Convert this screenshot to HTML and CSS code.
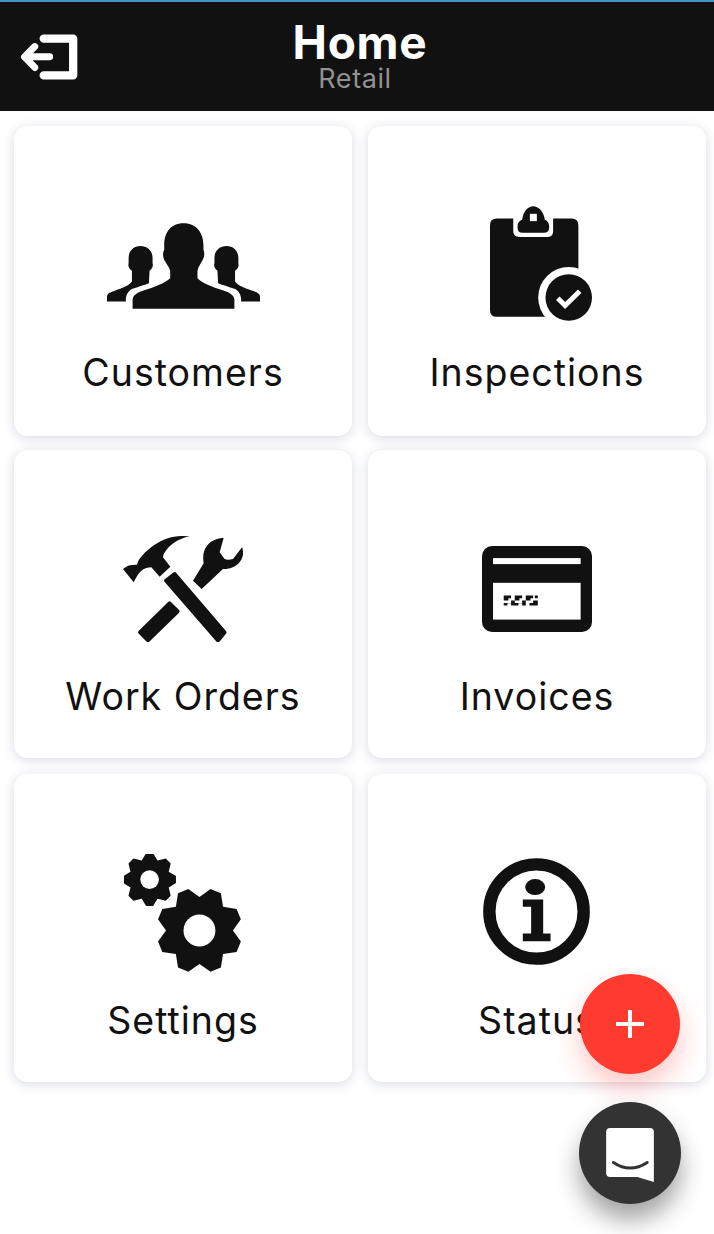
FILE: index.html
```html
<!DOCTYPE html>
<html lang="en">
<head>
    <meta charset="UTF-8">
    <meta name="viewport" content="width=device-width, initial-scale=1.0">
    <title>Home</title>
    <link rel="stylesheet" href="styles.css">
</head>
<body>
    <header class="top-bar">
        <button class="back-button" aria-label="Exit">
            <svg class="back-icon" viewBox="50 95 195 160">
                <path class="back-frame" d="M130 118H219V229H130"/>
                <path class="back-arrow" d="M148 173H78M103 142L72 173L103 205"/>
            </svg>
        </button>
        <div class="top-title">
            <h1>Home</h1>
            <p>Retail</p>
        </div>
    </header>

    <main class="menu-grid">
        <a class="menu-card">
            <span class="menu-icon">
                <svg class="icon-customers" viewBox="50 70 460 257">
                    <path d="M280 70C320 70 340 100 340 135V150C345 160 342 175 335 185C330 195 322 205 322 215V235C335 250 370 262 400 272C425 280 433 290 433 300V327H127V300C127 290 135 280 160 272C190 262 225 250 240 235V215C240 205 230 195 225 185C218 175 216 160 222 150V135C222 100 240 70 280 70Z"/>
                    <path id="side-head" d="M150 138C172 138 187 152 187 175V190C190 200 185 207 178 213L176 250C165 255 150 258 125 268C112 275 105 290 107 305H50V290C50 282 60 277 75 272C95 265 115 258 125 245V213C118 207 112 200 115 190V175C115 152 130 138 150 138Z"/>
                    <use href="#side-head" transform="translate(560) scale(-1 1)"/>
                </svg>
            </span>
            <span class="menu-label">Customers</span>
        </a>
        <a class="menu-card">
            <span class="menu-icon">
                <svg class="icon-inspections" viewBox="60 35 307 345">
                    <path d="M80 72H130V110C130 122 138 128 150 128H232C244 128 250 122 250 110V72H306Q326 72 326 92V348Q326 368 306 368H80Q60 368 60 348V92Q60 72 80 72Z"/>
                    <path d="M143 95C143 85 150 78 157 76C160 50 175 35 190 35C205 35 222 50 225 76C232 78 238 85 238 95V100Q238 115 222 115H158Q143 115 143 100Z"/>
                    <rect class="cut" x="180" y="58" width="21" height="22"/>
                    <circle class="cut" cx="297" cy="310" r="92"/>
                    <circle cx="297" cy="310" r="70"/>
                    <path class="check" d="M264 312L286 334L330 291"/>
                </svg>
            </span>
            <span class="menu-label">Inspections</span>
        </a>
        <a class="menu-card">
            <span class="menu-icon">
                <svg class="icon-orders" viewBox="40 36 360 318">
                    <path d="M40 135L55 125C65 122 75 122 82 122C84 110 92 100 100 92C115 75 140 55 170 44C195 36 220 35 240 36C215 42 190 55 175 72C165 84 160 92 160 100L182 128L150 158L125 130C115 130 105 133 95 140C85 148 80 160 72 175Z"/>
                    <path class="handle" d="M170 170L195 151L344 325L325 348Z"/>
                    <path class="handle" d="M180 239L203 262L115 348L92 325Z"/>
                    <path d="M250 170L276 195L340 135C355 137 375 130 387 118C400 105 404 85 397 70L370 105C360 108 350 108 345 105L330 85L342 42C325 42 303 50 292 65C282 78 278 95 282 118Z"/>
                </svg>
            </span>
            <span class="menu-label">Work Orders</span>
        </a>
        <a class="menu-card">
            <span class="menu-icon">
                <svg class="icon-invoices" viewBox="38 35 329 257">
                    <rect x="38" y="35" width="329" height="257" rx="30"/>
                    <rect class="cut" x="71" y="71" width="262" height="18"/>
                    <rect class="cut" x="71" y="145" width="262" height="110"/>
                    <path d="M103 183H125V191H117V198H103ZM125 198H136V183H158V191H150V198H136V213H125V206H114V213H103V205H125ZM158 198H169V183H191V191H183V198H169V213H158V206H147V213H136V205H158ZM191 198H205V213H180V205H191ZM196 183H205V191H196Z"/>
                </svg>
            </span>
            <span class="menu-label">Invoices</span>
        </a>
        <a class="menu-card menu-card-low">
            <span class="menu-icon">
                <svg class="icon-settings" viewBox="43 23 355 355">
                    <path transform="translate(270 253) scale(1.29)" d="M0-78L25.9-96.6L50-86.6L55-55L86.6-50L96.6-25.9L78 0L96.6 25.9L86.6 50L55 55L50 86.6L25.9 96.6L0 78L-25.9 96.6L-50 86.6L-55 55L-86.6 50L-96.6 25.9L-78 0L-96.6-25.9L-86.6-50L-55-55L-50-86.6L-25.9-96.6Z"/>
                    <circle class="cut" cx="270" cy="253" r="48"/>
                    <path transform="translate(120 100) rotate(22.5) scale(.8)" d="M0-78L25.9-96.6L50-86.6L55-55L86.6-50L96.6-25.9L78 0L96.6 25.9L86.6 50L55 55L50 86.6L25.9 96.6L0 78L-25.9 96.6L-50 86.6L-55 55L-86.6 50L-96.6 25.9L-78 0L-96.6-25.9L-86.6-50L-55-55L-50-86.6L-25.9-96.6Z"/>
                    <circle class="cut" cx="120" cy="100" r="28"/>
                </svg>
            </span>
            <span class="menu-label">Settings</span>
        </a>
        <a class="menu-card menu-card-low">
            <span class="menu-icon">
                <svg class="icon-status" viewBox="38 19 320 320">
                    <circle class="ring" cx="198" cy="179" r="141"/>
                    <ellipse cx="194" cy="106" rx="30" ry="24"/>
                    <path d="M157 143H218V245H240V268H157V245H182V165H157Z"/>
                </svg>
            </span>
            <span class="menu-label">Status</span>
        </a>
    </main>

    <button class="fab fab-add" aria-label="Add">
        <svg class="plus-icon" viewBox="0 0 28 28">
            <path d="M14 0V28M0 14H28"/>
        </svg>
    </button>
    <button class="fab fab-chat" aria-label="Chat">
        <svg class="chat-icon" viewBox="138 502 144 163">
            <path class="chat-bubble" d="M150 502H270Q282 502 282 514V665L232 650H150Q138 650 138 638V514Q138 502 150 502Z"/>
            <path class="chat-smile" d="M160 606Q210 640 262 606"/>
        </svg>
    </button>
</body>
</html>
```

FILE: styles.css
```css
/* Page */
html, body {
    margin: 0;
    padding: 0;
}
body {
    position: relative;
    height: 1234px;
    overflow: hidden;
    background-color: #fff;
    color: #111;
    font-family: Inter, "Noto Sans", sans-serif;
}

/* Top bar */
.top-bar {
    display: grid;
    grid-template-columns: 1fr auto 1fr;
    align-items: center;
    height: 109px;
    background-color: #111;
    border-top: 2px solid #3f97bd;
    color: #fff;
}
.back-button {
    justify-self: start;
    display: flex;
    margin: 2px 0 0 17px;
    padding: 0;
    background: none;
    border: none;
}
.back-icon {
    width: 65px;
    height: 53px;
}
.back-frame, .back-arrow {
    fill: none;
    stroke: #fff;
    stroke-linecap: round;
    stroke-linejoin: round;
}
.back-frame {
    stroke-width: 25;
}
.back-arrow {
    stroke-width: 21;
}
.top-title {
    padding-top: 3px;
    text-align: center;
}
.top-title h1 {
    margin: 0;
    padding-left: 6px;
    font-size: 46px;
    font-weight: 700;
    letter-spacing: 0.7px;
    line-height: 40px;
}
.top-title p {
    margin: 1px 0 0;
    padding-right: 4px;
    color: #919191;
    font-size: 27px;
    letter-spacing: 0.6px;
    line-height: 32px;
}

/* Menu cards */
.menu-grid {
    display: grid;
    grid-template-columns: 338px 338px;
    grid-template-rows: 310px 308px 310px;
    column-gap: 16px;
    row-gap: 14px;
    padding: 15px 8px 0 14px;
}
.menu-card {
    display: flex;
    flex-direction: column;
    align-items: center;
    background-color: #fff;
    border-radius: 14px;
    box-shadow: 0 2px 12px rgba(60, 70, 120, 0.2);
}
.menu-card-low {
    margin-top: 2px;
}
.menu-icon {
    display: flex;
    align-items: center;
    justify-content: center;
    height: 120px;
    margin-top: 79px;
}
.menu-icon svg {
    display: block;
    fill: #111;
}
.menu-label {
    margin-top: 28px;
    font-size: 37.5px;
    letter-spacing: 1px;
    line-height: 40px;
}
.cut {
    fill: #fff;
}
.check {
    fill: none;
    stroke: #fff;
    stroke-width: 15;
}
.handle {
    stroke: #111;
    stroke-width: 13;
    stroke-linejoin: round;
}
.ring {
    fill: none;
    stroke: #111;
    stroke-width: 37;
}
.icon-customers {
    width: 153px;
    height: 86px;
    margin-top: 1px;
}
.icon-inspections {
    width: 102px;
    height: 115px;
    margin: -3px 0 0 8px;
}
.icon-orders {
    width: 120px;
    height: 106px;
}
.icon-invoices {
    width: 110px;
    height: 86px;
}
.icon-settings {
    width: 118px;
    height: 118px;
    margin-top: -1px;
}
.icon-status {
    width: 107px;
    height: 107px;
    margin: -4px 2px 0 0;
}

/* Floating buttons */
.fab {
    position: absolute;
    display: flex;
    align-items: center;
    justify-content: center;
    padding: 0;
    border: none;
    border-radius: 50%;
}
.fab-add {
    top: 974px;
    left: 580px;
    width: 100px;
    height: 100px;
    background-color: #ff3b30;
    box-shadow: 0 14px 28px rgba(255, 59, 48, 0.28);
}
.plus-icon {
    width: 28px;
    height: 28px;
}
.plus-icon path {
    stroke: #fff;
    stroke-width: 4;
}
.fab-chat {
    top: 1102px;
    left: 579px;
    width: 102px;
    height: 102px;
    background-color: #333;
    box-shadow: 0 16px 24px rgba(0, 0, 0, 0.36);
}
.chat-icon {
    width: 48px;
    height: 54px;
    margin-top: 4px;
}
.chat-bubble {
    fill: #fff;
}
.chat-smile {
    fill: none;
    stroke: #333;
    stroke-width: 9;
    stroke-linecap: round;
}
```
